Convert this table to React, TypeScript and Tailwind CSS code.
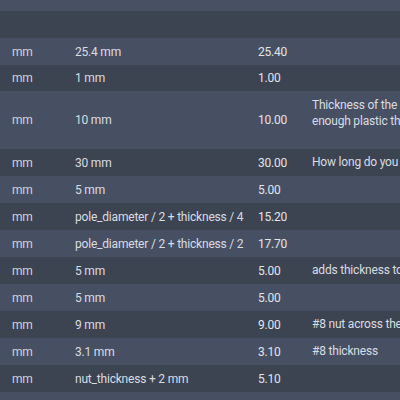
interface Param {
  unit: string;
  expression: string;
  value: string;
  comment?: string[];
  height: string;
}

const params: Param[] = [
  { unit: "mm", expression: "25.4 mm", value: "25.40", height: "h-[27px]" },
  { unit: "mm", expression: "1 mm", value: "1.00", height: "h-[26px]" },
  {
    unit: "mm",
    expression: "10 mm",
    value: "10.00",
    comment: ["Thickness of the lid, must leave", "enough plastic that the nut won't pull out"],
    height: "h-[58px]",
  },
  { unit: "mm", expression: "30 mm", value: "30.00", comment: ["How long do you want the arm to be"], height: "h-[27px]" },
  { unit: "mm", expression: "5 mm", value: "5.00", height: "h-[27px]" },
  { unit: "mm", expression: "pole_diameter / 2 + thickness / 4", value: "15.20", height: "h-[27px]" },
  { unit: "mm", expression: "pole_diameter / 2 + thickness / 2", value: "17.70", height: "h-[27px]" },
  { unit: "mm", expression: "5 mm", value: "5.00", comment: ["adds thickness to the inside of the clamp"], height: "h-[27px]" },
  { unit: "mm", expression: "5 mm", value: "5.00", height: "h-[27px]" },
  { unit: "mm", expression: "9 mm", value: "9.00", comment: ["#8 nut across the flats"], height: "h-[27px]" },
  { unit: "mm", expression: "3.1 mm", value: "3.10", comment: ["#8 thickness"], height: "h-[27px]" },
  { unit: "mm", expression: "nut_thickness + 2 mm", value: "5.10", height: "h-[27px]" },
];

export default function App() {
  return (
    <div
      className="w-[400px] h-[400px] overflow-hidden bg-[#475062] text-[12px] tracking-[-0.2px] text-[#d9dde2]"
      style={{ fontFamily: "Roboto, 'Liberation Sans', sans-serif" }}
    >
      <div className="h-[11px] bg-[#485163]" />
      <div className="h-[27px] bg-[#3c4351]" />
      {params.map((p, i) => (
        <div
          key={i}
          className={`grid grid-cols-[75px_183px_54px_1fr] items-center whitespace-nowrap ${p.height} ${
            i % 2 === 0 ? "bg-[#475062]" : "bg-[#3c4351]"
          }`}
        >
          <div className="pl-3 text-[#cfd3d9]">{p.unit}</div>
          <div>{p.expression}</div>
          <div className="text-[#e2e5e9]">{p.value}</div>
          <div className={`overflow-hidden leading-[15.5px] ${p.comment && p.comment.length > 1 ? "self-start pt-[7px]" : ""}`}>
            {p.comment?.map((line, j) => (
              <div key={j}>{line}</div>
            ))}
          </div>
        </div>
      ))}
      <div className="h-[8px] bg-[#475062]" />
    </div>
  );
}
